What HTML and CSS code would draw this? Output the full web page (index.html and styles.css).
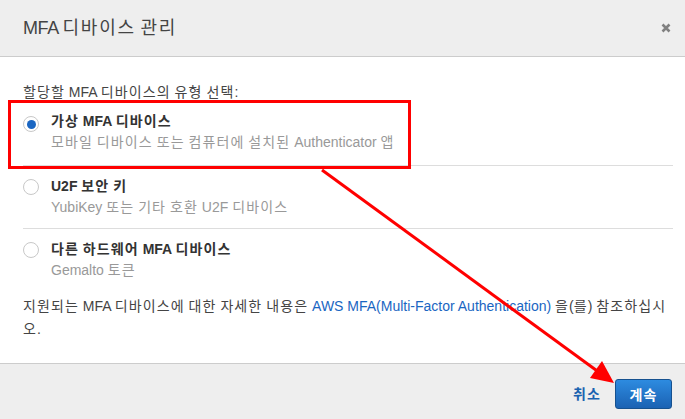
FILE: index.html
```html
<!DOCTYPE html>
<html lang="ko">
<head>
<meta charset="utf-8">
<link rel="stylesheet" href="styles.css">
</head>
<body>
<div class="dialog">
  <div class="header">
    <h1 class="title">MFA <span class="ko">디바이스</span> <span class="ko">관리</span></h1>
    <svg class="close" width="10" height="10" viewBox="0 0 10 10"><path d="M1.5 1.5 L8.5 8.5 M8.5 1.5 L1.5 8.5" stroke="#808080" stroke-width="2.6" stroke-linecap="butt"/></svg>
  </div>
  <div class="body">
    <p class="prompt"><span class="ko">할당할</span> MFA <span class="ko">디바이스의</span> <span class="ko">유형</span> <span class="ko">선택</span>:</p>
    <div class="options">
      <div class="option">
        <span class="radio checked"></span>
        <div class="opt-text">
          <div class="opt-title"><span class="ko">가상</span> MFA <span class="ko">디바이스</span></div>
          <div class="opt-desc"><span class="ko">모바일</span> <span class="ko">디바이스</span> <span class="ko">또는</span> <span class="ko">컴퓨터에</span> <span class="ko">설치된</span> Authenticator <span class="ko">앱</span></div>
        </div>
      </div>
      <div class="option">
        <span class="radio"></span>
        <div class="opt-text">
          <div class="opt-title">U2F <span class="ko">보안</span> <span class="ko">키</span></div>
          <div class="opt-desc">YubiKey <span class="ko">또는</span> <span class="ko">기타</span> <span class="ko">호환</span> U2F <span class="ko">디바이스</span></div>
        </div>
      </div>
      <div class="option">
        <span class="radio"></span>
        <div class="opt-text">
          <div class="opt-title"><span class="ko">다른</span> <span class="ko">하드웨어</span> MFA <span class="ko">디바이스</span></div>
          <div class="opt-desc">Gemalto <span class="ko">토큰</span></div>
        </div>
      </div>
    </div>
    <p class="note"><span class="ko">지원되는</span> MFA <span class="ko">디바이스에</span> <span class="ko">대한</span> <span class="ko">자세한</span> <span class="ko">내용은</span> <a class="link" href="#">AWS MFA(Multi-Factor Authentication)</a> <span class="ko">을</span>(<span class="ko">를</span>) <span class="ko">참조하십시오</span>.</p>
  </div>
  <div class="footer">
    <a class="cancel" href="#"><span class="ko">취소</span></a>
    <button class="primary"><span class="ko">계속</span></button>
  </div>
  <div class="highlight"></div>
  <svg class="arrow" width="685" height="419" viewBox="0 0 685 419">
    <line x1="322" y1="170" x2="600" y2="373" stroke="#ff0000" stroke-width="3"/>
    <polygon points="614,383 590,378 602,361" fill="#ff0000"/>
  </svg>
</div>
</body>
</html>
```
FILE: styles.css
```css
* { box-sizing: border-box; }
html, body { margin: 0; padding: 0; }
body {
  width: 685px;
  height: 419px;
  overflow: hidden;
  font-family: "Liberation Sans", "Noto Sans CJK KR", sans-serif;
  font-size: 14px;
  color: #444;
  background: #fff;
}
.ko { letter-spacing: 1.1px; }
.dialog {
  position: relative;
  width: 685px;
  height: 419px;
  display: flex;
  flex-direction: column;
}
.header {
  height: 57px;
  flex: none;
  background: #eeeeee;
  border-bottom: 1px solid #cccccc;
  display: flex;
  align-items: center;
  justify-content: space-between;
  padding: 0 14px 4px 23px;
}
.title {
  margin: 0;
  font-size: 18px;
  font-weight: normal;
  color: #444;
  letter-spacing: -0.4px;
}
.title .ko { letter-spacing: 1.8px; }
.close { display: block; margin-top: 4px; }
.body {
  flex: 1;
  padding: 24px 12px 0 23px;
}
.prompt {
  margin: 0;
  line-height: 22px;
  color: #444;
}
.option {
  display: flex;
  align-items: flex-start;
  padding: 10px 0;
  border-bottom: 1px solid #dddddd;
}
.option:first-child { padding-top: 8px; padding-bottom: 12px; }
.option:last-child { border-bottom: none; }
.radio {
  flex: none;
  width: 16px;
  height: 16px;
  border: 1px solid #c8c8c8;
  border-radius: 50%;
  background: #fff;
  margin-top: 3px;
  margin-right: 12px;
  display: flex;
  align-items: center;
  justify-content: center;
}
.option:first-child .radio { margin-top: 5px; }
.radio.checked::after {
  content: "";
  width: 9px;
  height: 9px;
  border-radius: 50%;
  background: #1a66c2;
}
.opt-title {
  font-weight: bold;
  color: #333;
  line-height: 21px;
}
.opt-desc {
  color: #999;
  line-height: 21px;
}
.note {
  margin: 4px 0 0;
  line-height: 23px;
  color: #444;
}
.link {
  color: #1a66c2;
  text-decoration: none;
}
.footer {
  height: 56px;
  flex: none;
  background: #eeeeee;
  border-top: 1px solid #cccccc;
  display: flex;
  align-items: flex-start;
  justify-content: flex-end;
  padding: 15px 13px 0 0;
  gap: 14px;
}
.cancel {
  color: #1a62b0;
  text-decoration: none;
  font-weight: bold;
  line-height: 30px;
}
.primary {
  width: 57px;
  height: 30px;
  border: 1px solid #16518f;
  border-radius: 3px;
  background: linear-gradient(#2d8be0, #1b62b3);
  color: #fff;
  font-family: inherit;
  font-size: 14px;
  font-weight: bold;
  padding: 0;
}
.highlight {
  position: absolute;
  left: 8px;
  top: 100px;
  width: 403px;
  height: 69px;
  border: 3px solid #ff0000;
  pointer-events: none;
}
.arrow {
  position: absolute;
  left: 0;
  top: 0;
  pointer-events: none;
}
```
